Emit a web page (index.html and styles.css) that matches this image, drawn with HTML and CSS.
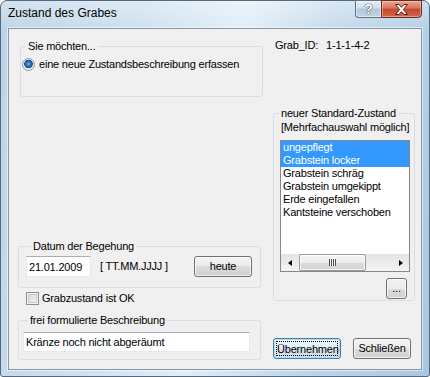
FILE: index.html
```html
<!DOCTYPE html>
<html>
  <head>
    <meta charset="UTF-8">
    <title>Zustand des Grabes</title>
    <link rel="stylesheet" href="styles.css">
  </head>
  <body>
    <div class="window">
      <div class="titlebar">
        <span class="caption">Zustand des Grabes</span>
        <div class="caption-buttons">
          <button type="button" class="cap-btn help">?</button>
          <button type="button" class="cap-btn close">
            <svg width="15" height="11" viewBox="0 0 15 11">
              <path d="M1.5 0.5 H5 L7.5 3.3 L10 0.5 H13.5 L9.4 5.5 L13.5 10.5 H10 L7.5 7.7 L5 10.5 H1.5 L5.6 5.5 Z" fill="#fff" stroke="#5a1f14" stroke-width="1" stroke-linejoin="round"/>
            </svg>
          </button>
        </div>
      </div>
      <div class="client">
        <div class="col-left">
          <fieldset class="group group-mode">
            <legend>Sie möchten...</legend>
            <label class="radio-row"><span class="radio"></span>eine neue Zustandsbeschreibung erfassen</label>
          </fieldset>
          <fieldset class="group group-date">
            <legend>Datum der Begehung</legend>
            <div class="date-row">
              <input type="text" class="textbox date" value="21.01.2009">
              <span class="hint">[ TT.MM.JJJJ ]</span>
              <button type="button" class="btn today">heute</button>
            </div>
          </fieldset>
          <label class="check-row"><span class="checkbox"></span>Grabzustand ist OK</label>
          <fieldset class="group group-desc">
            <legend>frei formulierte Beschreibung</legend>
            <input type="text" class="textbox desc" value="Kränze noch nicht abgeräumt">
          </fieldset>
        </div>
        <div class="col-right">
          <div class="grab-id"><span class="grab-label">Grab_ID:</span><span>1-1-1-4-2</span></div>
          <fieldset class="group group-std">
            <legend>neuer Standard-Zustand</legend>
            <div class="sub">[Mehrfachauswahl möglich]</div>
            <div class="listbox">
              <ul class="items">
                <li class="sel">ungepflegt</li>
                <li class="sel">Grabstein locker</li>
                <li>Grabstein schräg</li>
                <li>Grabstein umgekippt</li>
                <li>Erde eingefallen</li>
                <li>Kantsteine verschoben</li>
              </ul>
              <div class="hscroll">
                <span class="sb-btn"><span class="arrow-left"></span></span>
                <div class="sb-track"><span class="thumb"><span class="grip"></span></span></div>
                <span class="sb-btn"><span class="arrow-right"></span></span>
              </div>
            </div>
            <div class="more-row"><button type="button" class="btn more">...</button></div>
          </fieldset>
          <div class="actions">
            <button type="button" class="btn default"><span class="focus">Übernehmen</span></button>
            <button type="button" class="btn close-btn">Schließen</button>
          </div>
        </div>
      </div>
    </div>
  </body>
</html>
```

FILE: styles.css
```css
* {
  box-sizing: border-box;
}
body {
  margin: 0;
  background: #fff;
  font-family: "Liberation Sans", Arial, sans-serif;
  font-size: 11px;
  line-height: 13px;
  letter-spacing: -0.2px;
  color: #000;
}
.window {
  width: 430px;
  height: 377px;
  display: flex;
  flex-direction: column;
  padding: 0 7px 6px 7px;
  border: 1px solid #52697f;
  border-radius: 7px 7px 3px 3px;
  background:
    linear-gradient(to bottom, rgba(255, 255, 255, 0.35), rgba(255, 255, 255, 0) 30px),
    linear-gradient(100deg, #bcd3e7 0%, #cfe1ef 30%, #e2eef7 50%, #c3d9eb 70%, #a9c7e1 100%);
}
.titlebar {
  height: 27px;
  display: flex;
  justify-content: space-between;
  align-items: flex-start;
}
.caption {
  padding-top: 5px;
  font-size: 12px;
  line-height: 15px;
  letter-spacing: 0;
}
.caption-buttons {
  display: flex;
  margin-top: -1px;
}
.cap-btn {
  height: 18px;
  padding: 0;
  display: flex;
  align-items: center;
  justify-content: center;
  font-family: "Liberation Sans", Arial, sans-serif;
}
.help {
  width: 26px;
  border: 1px solid #5d7185;
  border-right: none;
  border-radius: 0 0 0 4px;
  background: linear-gradient(#e4edf4 0%, #d1dfea 45%, #b3c7d8 50%, #c4d6e4 100%);
  box-shadow: inset 0 0 0 1px rgba(255, 255, 255, 0.5);
  color: #fff;
  font-size: 14px;
  font-weight: bold;
  text-shadow: 0 0 1px #3a4a5a, 0 0 1px #3a4a5a, 0 0 1px #3a4a5a;
}
.close {
  width: 41px;
  border: 1px solid #6b2a1e;
  border-radius: 0 0 4px 0;
  background: linear-gradient(#e8a893 0%, #d7765e 45%, #c3452c 50%, #d4674c 100%);
  box-shadow: inset 0 0 0 1px rgba(255, 220, 210, 0.45);
}
.client {
  flex: 1;
  display: flex;
  gap: 10px;
  padding-left: 9px;
  background: #f0f0f0;
  border: 1px solid #8797a8;
  box-shadow: 0 0 0 1px rgba(255, 255, 255, 0.55);
}
.col-left {
  width: 245px;
  display: flex;
  flex-direction: column;
  align-items: flex-start;
}
.col-right {
  width: 142px;
  display: flex;
  flex-direction: column;
  align-items: flex-start;
}
.group {
  margin: 0;
  padding: 0;
  border: 1px solid #d5dfe5;
  border-radius: 3px;
  min-width: 0;
}
.group legend {
  margin-left: 5px;
  padding: 0 2px;
  line-height: 13px;
}
.group-mode {
  margin: 11px 0 0 2px;
  width: 243px;
  height: 57px;
  padding-top: 5px;
}
.radio-row,
.check-row {
  display: flex;
  align-items: center;
  height: 13px;
  white-space: nowrap;
}
.radio-row {
  margin-left: 1px;
  gap: 4px;
}
.radio {
  width: 13px;
  height: 13px;
  border-radius: 50%;
  border: 1px solid #8b9bab;
  background: radial-gradient(circle at 50% 45%, #7fc4f2 0, #2f86c9 1.5px, #1b4f86 4px, #d8dde2 4.5px, #f4f4f4 6px);
}
.group-date {
  margin-top: 143px;
  width: 243px;
  height: 48px;
  padding: 3px 8px 0 7px;
}
.date-row {
  display: flex;
  align-items: center;
}
.textbox {
  height: 21px;
  padding: 0 2px;
  border: 1px solid #e3e9ef;
  border-top-color: #abadb3;
  background: #fff;
  font: inherit;
  letter-spacing: inherit;
  color: #000;
  outline: none;
}
.date {
  width: 65px;
}
.hint {
  margin-left: 9px;
  white-space: nowrap;
}
.btn {
  height: 21px;
  padding: 0;
  border: 1px solid #707070;
  border-radius: 3px;
  background: linear-gradient(#f2f2f2 0%, #ebebeb 50%, #dddddd 50%, #cfcfcf 100%);
  box-shadow: inset 0 0 0 1px rgba(255, 255, 255, 0.7);
  font: inherit;
  letter-spacing: inherit;
  color: #000;
}
.today {
  width: 58px;
  margin-left: auto;
}
.check-row {
  margin: 4px 0 0 8px;
  gap: 3px;
}
.checkbox {
  width: 13px;
  height: 13px;
  border: 1px solid #8f8f8f;
  background: #f4f4f4;
  box-shadow: inset 0 0 0 1px #f4f4f4, inset 0 0 0 2px #c9c9c9;
  background-image: linear-gradient(135deg, #d3d3d3, #f8f8f8);
}
.group-desc {
  margin-top: 9px;
  width: 243px;
  height: 46px;
  padding: 5px 0 0 4px;
}
.desc {
  width: 227px;
  height: 20px;
}
.grab-id {
  margin-top: 10px;
  padding-left: 2px;
  display: flex;
  white-space: nowrap;
}
.grab-label {
  width: 51px;
}
.group-std {
  margin-top: 55px;
  width: 142px;
  height: 194px;
  padding: 1px 0 0 0;
}
.sub {
  padding-left: 7px;
  white-space: nowrap;
}
.listbox {
  margin: 6px 0 0 6px;
  width: 130px;
  height: 132px;
  border: 1px solid #828790;
  background: #fff;
  display: flex;
  flex-direction: column;
}
.items {
  flex: 1;
  margin: 0;
  padding: 0;
  list-style: none;
  overflow: hidden;
}
.items li {
  height: 13px;
  padding-left: 2px;
  white-space: nowrap;
}
.items li.sel {
  background: #3399ff;
  color: #fff;
}
.hscroll {
  height: 17px;
  display: flex;
  background: linear-gradient(#e3e3e3, #f3f3f3);
}
.sb-btn {
  width: 17px;
  display: flex;
  align-items: center;
  justify-content: center;
}
.arrow-left {
  border-top: 3.5px solid transparent;
  border-bottom: 3.5px solid transparent;
  border-right: 4px solid #000;
}
.arrow-right {
  border-top: 3.5px solid transparent;
  border-bottom: 3.5px solid transparent;
  border-left: 4px solid #000;
}
.sb-track {
  flex: 1;
  display: flex;
}
.thumb {
  margin-left: 1px;
  width: 67px;
  height: 17px;
  border: 1px solid #9a9a9a;
  border-radius: 2px;
  background: linear-gradient(#f6f6f6 0%, #ececec 50%, #dcdcdc 51%, #d4d4d4 100%);
  box-shadow: inset 0 0 0 1px rgba(255, 255, 255, 0.8);
  display: flex;
  align-items: center;
  justify-content: center;
}
.grip {
  width: 7px;
  height: 7px;
  background: repeating-linear-gradient(to right, #4d4d4d 0, #4d4d4d 1px, #f8f8f8 1px, #f8f8f8 2px);
}
.more-row {
  width: 100%;
  display: flex;
  justify-content: flex-end;
  padding-right: 7px;
  margin-top: 6px;
}
.more {
  width: 21px;
}
.actions {
  margin-top: 37px;
  display: flex;
  gap: 12px;
}
.default {
  width: 68px;
  padding: 2px;
  border-color: #3c7fb1;
  background: linear-gradient(#eef6fb 0%, #e3eef6 50%, #d3e4f0 50%, #c9dcea 100%);
  box-shadow: inset 0 0 0 1px #b9dcf3;
}
.focus {
  display: block;
  height: 100%;
  border: 1px dotted #000;
  line-height: 13px;
  padding-top: 1px;
}
.close-btn {
  width: 58px;
}
```
